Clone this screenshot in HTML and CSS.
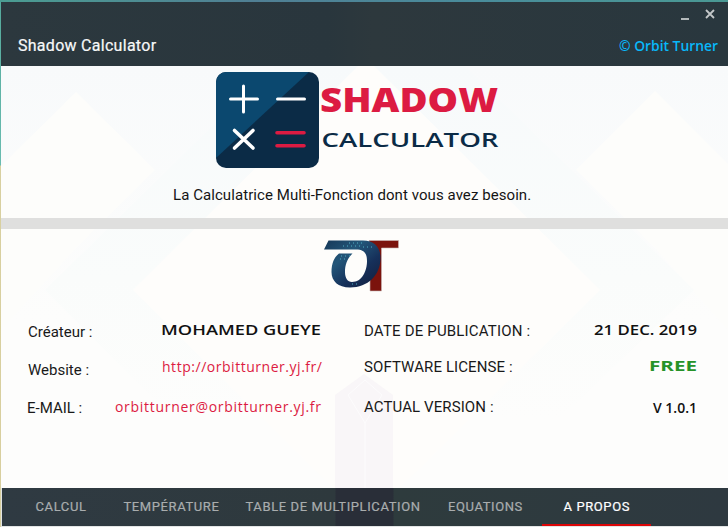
FILE: index.html
```html
<!DOCTYPE html>
<html lang="fr">
<head>
<meta charset="utf-8">
<title>Shadow Calculator</title>
<link rel="stylesheet" href="styles.css">
</head>
<body>
<div class="window">
  <header class="titlebar">
    <div class="controls">
      <svg width="8" height="10" viewBox="0 0 8 10"><path d="M0 10h8" stroke="#b3b9bb" stroke-width="2"/></svg>
      <svg width="10" height="10" viewBox="0 0 10 10"><path d="M1 1l8 8M9 1l-8 8" stroke="#c3c7c9" stroke-width="1.8"/></svg>
    </div>
    <div class="heading">
      <h1>Shadow Calculator</h1>
      <svg class="credit" width="100" height="20"><text x="0" y="14" textLength="99" lengthAdjust="spacingAndGlyphs">© Orbit Turner</text></svg>
    </div>
  </header>
  <main>
    <svg class="backdrop" width="727" height="422" viewBox="1 66 727 422">
      <defs><linearGradient id="sky" x1="0" y1="0" x2="0" y2="1"><stop offset="0" stop-color="#f8fafb"/><stop offset=".6" stop-color="#fdfdfc"/></linearGradient>
      <linearGradient id="band" gradientUnits="userSpaceOnUse" x1="0" y1="66" x2="0" y2="420"><stop offset="0" stop-color="#f7fafb"/><stop offset=".6" stop-color="#fafcfb"/><stop offset="1" stop-color="#fdfdfc"/></linearGradient></defs>
      <rect x="1" y="66" width="727" height="422" fill="url(#sky)"/>
      <path d="M76 92L155 170 76 248-3 170zM655 91L734 170 655 248 576 170z" fill="#fdfdfb"/>
      <path d="M1 170L76 248 1 330zM728 170L655 248 728 330z" fill="#fdfdfb"/>
      <path d="M274 66L45 290 242 488H488L694 290 465 66z" fill="url(#band)"/>
      <path d="M358 66L133 290 333 488H400L600 290 374 66z" fill="#fefdfb"/>
      <path d="M335 488V395L364 374 393 395V488z" fill="#f9f6f8"/>
      <path d="M365 380L382 395 365 423 348 395zM365 423V488" fill="none" stroke="#fdfcfd"/>
    </svg>
    <section class="hero">
      <svg width="290" height="98" viewBox="215 71 290 98">
        <defs><clipPath id="tile"><rect x="216" y="72" width="103" height="96" rx="10"/></clipPath></defs>
        <g clip-path="url(#tile)"><rect x="216" y="72" width="103" height="96" fill="#0b2b46"/><path d="M216 72H309L216 158z" fill="#0b486f"/></g>
        <g fill="none" stroke="#fff" stroke-width="3" stroke-linecap="round"><path d="M230.500 99H257.500M243.500 86V112M277.500 99H304.500"/><path d="M234.500 130.500L253 148M253 130.500L234.500 148" stroke-width="3.600"/><path d="M277 132.700H304M277 145.700H304" stroke="#dc1b42" stroke-width="3.600"/></g>
        <text class="brand" x="320" y="112" textLength="178" lengthAdjust="spacingAndGlyphs">SHADOW</text>
        <text class="subbrand" x="321.500" y="147" textLength="177" lengthAdjust="spacingAndGlyphs">CALCULATOR</text>
      </svg>
      <p>La Calculatrice Multi-Fonction dont vous avez besoin.</p>
    </section>
    <div class="divider"></div>
    <section class="about">
      <svg class="monogram" width="78" height="56" viewBox="323 238 78 56">
        <defs><linearGradient id="blue" x1="0" y1="0" x2="1" y2="1"><stop stop-color="#163858"/><stop offset=".35" stop-color="#235679"/><stop offset=".65" stop-color="#16305a"/><stop offset="1" stop-color="#121d3b"/></linearGradient></defs>
        <path d="M369 240.500H398.500V248H381.500V291H370V262z" fill="#7b130d" stroke="#c9b9b7" stroke-width=".6"/>
        <path fill-rule="evenodd" d="M328.500 240.500H363C374 240.500 380.500 247 380.500 258C380.500 275 368 287.500 350 287.500C338 287.500 331.500 281 331.500 272C331.500 263 334.500 257 339 253.500H352.500C347 259 345 265 345 272C345 278 347.500 282 352 282C362 282 367 271 367 261C367 252 363 249.500 356 249.500H324z" fill="url(#blue)"/>
        <g stroke="#50afc4" stroke-width="1" stroke-dasharray="1 3"><path d="M343 246h20M349 243h13M341 256h9M340 259h7M352 284h8M363 247h9"/></g>
      </svg>
      <div class="details">
        <dl>
          <dt class="lower">Créateur :</dt><dd><svg width="162" height="20"><text class="tech" x="1" y="14" textLength="160" lengthAdjust="spacingAndGlyphs">MOHAMED GUEYE</text></svg></dd>
          <dt class="lower">Website :</dt><dd><svg width="162" height="20"><text class="link" x="2" y="14" textLength="160" lengthAdjust="spacing">http://orbitturner.yj.fr/</text></svg></dd>
          <dt class="email">E-MAIL :</dt><dd><svg width="208" height="20"><text class="link" x="1" y="14" textLength="206" lengthAdjust="spacing">orbitturner@orbitturner.yj.fr</text></svg></dd>
        </dl>
        <dl>
          <dt>DATE DE PUBLICATION :</dt><dd><svg width="105" height="20"><text class="tech" x="2" y="14" textLength="103" lengthAdjust="spacingAndGlyphs">21 DEC. 2019</text></svg></dd>
          <dt class="raised">SOFTWARE LICENSE :</dt><dd><svg width="49" height="20"><text class="tech free" x="1" y="13" textLength="48" lengthAdjust="spacingAndGlyphs">FREE</text></svg></dd>
          <dt class="raised">ACTUAL VERSION :</dt><dd><svg width="46" height="20"><text class="tech" x="2" y="15" textLength="44" lengthAdjust="spacingAndGlyphs">V 1.0.1</text></svg></dd>
        </dl>
      </div>
    </section>
  </main>
  <nav>
    <a class="calc">CALCUL</a><a class="temp">TEMPÉRATURE</a><a class="mult">TABLE DE MULTIPLICATION</a><a class="equa">EQUATIONS</a><a class="active">A PROPOS</a>
  </nav>
</div>
</body>
</html>
```
FILE: styles.css
```css
* { box-sizing: border-box; }
body {
  margin: 0;
  height: 527px;
  padding: 2px 0 0 1px;
  overflow: hidden;
  font-family: Roboto, sans-serif;
  background: linear-gradient(90deg, #4b9d92, #507f94 35%, #498c9b 65%, #4a9994) top / 100% 2px no-repeat,
    linear-gradient(#55aa9c 0, #69bcb0 165px, #d8d0a0 166px, #d8cf9f);
}
svg { display: block; overflow: visible; }
.window { height: 525px; display: flex; flex-direction: column; background: #e2e5e5; }
.titlebar {
  height: 64px;
  background: linear-gradient(90deg, #2c383e, #29363d 45%, #2d383d 51%, #29373e);
  display: flex;
  flex-direction: column;
}
.controls { display: flex; justify-content: flex-end; gap: 16px; padding: 7px 13px 0 0; }
.heading { display: flex; justify-content: space-between; align-items: center; margin-top: 15px; padding: 0 9px 0 17px; }
h1 { margin: 0; font-size: 16px; line-height: 20px; font-weight: 400; letter-spacing: .28px; color: #f7f8f8; -webkit-text-stroke: .2px #f7f8f8; }
.credit { margin-top: 3px; }
.credit text { font: 600 15px "Open Sans", sans-serif; fill: #08b8fa; }
main { height: 422px; position: relative; background: #fdfdfc; }
.backdrop { position: absolute; inset: 0; overflow: hidden; }
.hero { position: relative; height: 152px; padding: 5px 0 0 214px; }
.hero p { margin: 16px 0 0 -42px; font-size: 15px; line-height: 20px; letter-spacing: .07px; color: #151515; white-space: nowrap; }
.brand { font: 800 33px "Open Sans", sans-serif; fill: #dc1b42; }
.subbrand { font: 600 20px "Open Sans", sans-serif; fill: #0b2b46; }
.divider { position: relative; height: 11px; background: #dfdfde; }
.about { position: relative; height: 259px; padding-top: 9px; }
.monogram { margin-left: 322px; }
.details { display: grid; grid-template-columns: 295px 334px; column-gap: 41px; padding-left: 26px; margin-top: 27px; }
dl { margin: 0; display: grid; grid-template-columns: auto auto; grid-template-rows: 37px 40px 20px; justify-content: space-between; }
dt { font-size: 15px; line-height: 20px; color: #191919; white-space: nowrap; }
dl + dl dt { letter-spacing: .18px; padding-left: 1px; }
dl + dl .raised { margin-top: -1px; letter-spacing: .1px; }
.lower { padding: 1px 0 0 1px; }
.lower + dd + .lower { padding-top: 2px; }
dd { margin: 0; justify-self: end; }
.tech { font: 600 14.5px "Open Sans", sans-serif; fill: #111; }
.link { font: 400 14px "Open Sans", sans-serif; fill: #dc1b42; }
.free { fill: #269329; font-weight: 700; }
nav {
  height: 38px;
  margin-left: 1px;
  display: flex;
  background: linear-gradient(90deg, #2f3a42, #2e393d 333px, #292e38 334px, #292e38 391px, #2e3b3d 392px, #2e3940);
}
nav a { height: 38px; line-height: 38px; font-size: 13px; font-weight: 400; letter-spacing: .6px; color: #a9adae; -webkit-text-stroke: .2px currentColor; white-space: nowrap; }
.calc { margin-left: 33.500px; width: 88px; }
.temp { width: 122px; }
.mult { width: 202.500px; }
.equa { width: 94px; }
nav .active { width: 109px; padding-left: 21.500px; color: #fff; border-bottom: 2px solid #dc0507; }
```
